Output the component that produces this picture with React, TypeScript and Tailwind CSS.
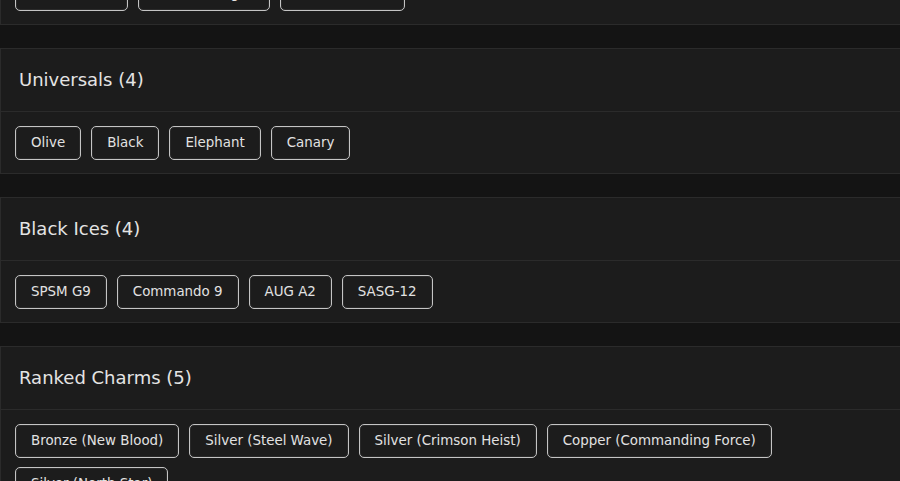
import React from "react";

type Group = {
  title: string;
  items: string[];
};

const GROUPS: Group[] = [
  { title: "Seasonal (3)", items: ["Gold Bullion", "Pink Flamingos", "Ocean Breeze"] },
  { title: "Universals (4)", items: ["Olive", "Black", "Elephant", "Canary"] },
  { title: "Black Ices (4)", items: ["SPSM G9", "Commando 9", "AUG A2", "SASG-12"] },
  {
    title: "Ranked Charms (5)",
    items: [
      "Bronze (New Blood)",
      "Silver (Steel Wave)",
      "Silver (Crimson Heist)",
      "Copper (Commanding Force)",
      "Silver (North Star)",
    ],
  },
];

const font = { fontFamily: '"DejaVu Sans", "Liberation Sans", sans-serif' };

function Chip({ label }: { label: string }) {
  return (
    <span className="flex h-[34px] items-center rounded-[5px] border border-[#c4c4c4] px-[15px] text-[13.4px] text-[#e2e2e2] shadow-[inset_0_0_0_1px_#2a2a2a]">
      {label}
    </span>
  );
}

function GroupCard({ group }: { group: Group }) {
  return (
    <section className="border-y border-l border-[#2b2b2b] bg-[#1c1c1c]">
      <header className="flex h-[63px] items-center border-b border-[#2b2b2b] px-[18px] pb-[2px]">
        <h2 className="text-[18px] text-[#e4e4e4]">{group.title}</h2>
      </header>
      <div className="flex flex-wrap gap-x-[10px] gap-y-[9px] px-[14px] pb-[13px] pt-[14px]">
        {group.items.map((item) => (
          <Chip key={item} label={item} />
        ))}
      </div>
    </section>
  );
}

export default function App() {
  return (
    <div className="h-[481px] w-full overflow-hidden bg-[#141414]" style={font}>
      <div className="mt-[-101px] flex flex-col gap-[23px]">
        {GROUPS.map((g) => (
          <GroupCard key={g.title} group={g} />
        ))}
      </div>
    </div>
  );
}
